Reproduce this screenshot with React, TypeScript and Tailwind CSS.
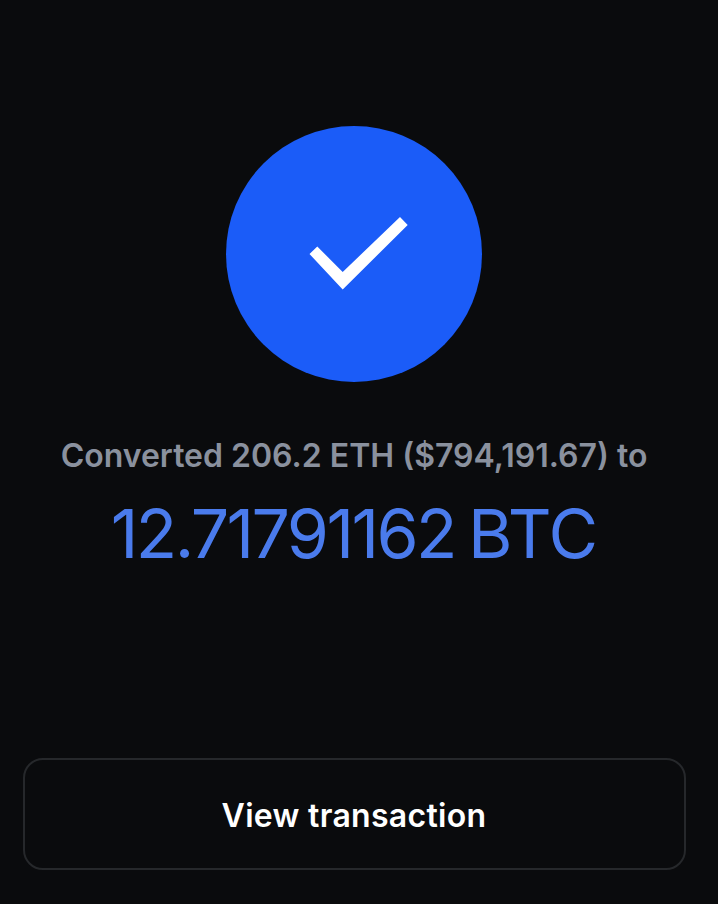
import React from "react";

function App() {
  return (
    <div className="h-[904px] w-[718px] overflow-hidden bg-[#0a0b0d] pr-[10px] flex flex-col items-center font-['Inter',sans-serif]">
      <div className="mt-[126px] h-[256px] w-[256px] shrink-0 rounded-full bg-[#1b5cf8]">
        <svg width="256" height="256" viewBox="0 0 256 256">
          <polygon points="83.5,128 91.3,120.5 116.7,146 174,91 181.7,99 116.7,163.5" fill="#ffffff" />
        </svg>
      </div>
      <p className="mt-[53px] text-[32px] leading-[42px] font-semibold text-[#8a919e] whitespace-nowrap">
        Converted 206.2 ETH ($794,191.67) to
      </p>
      <p className="mt-[16px] mb-[1px] text-[68px] leading-[80px] font-normal text-[#4a7bec] tracking-[-1px] [word-spacing:-5px] whitespace-nowrap">
        <span className="tracking-[-2.6px]">12.71791162</span> BTC
      </p>
      <div className="mt-[184px] flex h-[112px] w-[663px] items-center justify-center rounded-[20px] border-2 border-[#26282b]">
        <span className="mt-[3px] text-[32px] font-semibold text-white tracking-[0.3px]">View transaction</span>
      </div>
    </div>
  );
}

export default App;
